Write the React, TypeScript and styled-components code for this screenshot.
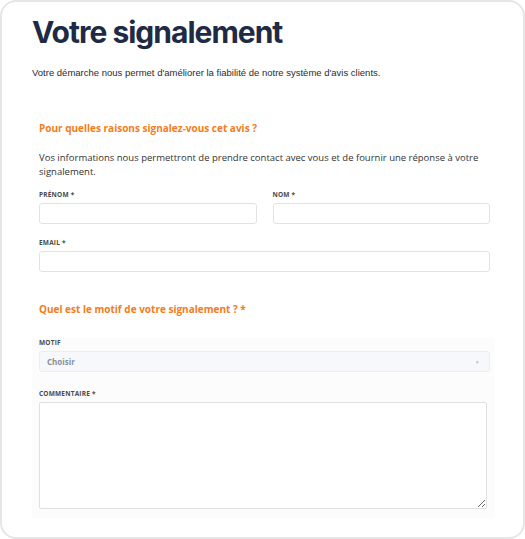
import styled, { createGlobalStyle } from "styled-components";

const GlobalStyle = createGlobalStyle`
body {
  margin: 0;
  background: #ffffff;
}
* {
  box-sizing: border-box;
}
`

const Card = styled.div`
width: 525px;
height: 539px;
border: 2px solid #e6e6e6;
border-radius: 16px;
background: #ffffff;
padding: 10px 28px 0 30px;
overflow: hidden;
`
const Title = styled.h1`
margin: 0;
font-family: Inter, "Liberation Sans", sans-serif;
font-weight: 700;
font-size: 30px;
line-height: 40px;
letter-spacing: -1px;
color: #1f2a44;
`
const Intro = styled.p`
margin: 14px 0 0;
font-family: "Liberation Sans", Arial, sans-serif;
font-size: 9.5px;
line-height: 14px;
color: #2b2b2b;
`
const Section = styled.section<{ $shade?: boolean }>`
margin-top: ${p => (p.$shade ? "0" : "40px")};
padding: 0 5px 9px 7px;
background: ${p => (p.$shade ? "#fcfcfd" : "transparent")};
font-family: "Open Sans", "Liberation Sans", sans-serif;
`
const Heading = styled.h2`
margin: 0;
font-size: 10px;
line-height: 16px;
font-weight: 700;
color: #f47c20;
`
const Info = styled.p`
margin: 15px 0 0;
font-size: 9.5px;
line-height: 13.5px;
color: #333333;
`
const Row = styled.div`
display: grid;
grid-template-columns: 1fr 1fr;
gap: 16px;
`
const Field = styled.div<{ $top?: number }>`
margin-top: ${p => p.$top ?? 14}px;
`
const Label = styled.label`
display: block;
font-size: 6.5px;
line-height: 9px;
font-weight: 700;
letter-spacing: 0.2px;
color: #4a4a4a;
text-transform: uppercase;
margin-bottom: 4px;
`
const Input = styled.input`
display: block;
width: 100%;
height: 21px;
border: 1px solid #e2e2e2;
border-radius: 3px;
background: #ffffff;
outline: none;
`
const SelectBox = styled.div`
display: flex;
align-items: center;
justify-content: space-between;
height: 21px;
padding: 0 10px 0 7px;
border: 1px solid #eceef2;
border-radius: 3px;
background: #f6f8fb;
font-size: 8px;
font-weight: 700;
color: #8a8f98;
`
const Caret = styled.span`
font-size: 5px;
color: #c0c4ca;
`
const TextArea = styled.textarea`
display: block;
width: 448px;
height: 107px;
border: 1px solid #e0e0e0;
border-radius: 2px;
resize: vertical;
outline: none;
`
const Spacer = styled.div`
height: 29px;
`

export default function App() {
  return (
    <>
      <GlobalStyle />
      <Card>
        <Title>Votre signalement</Title>
        <Intro>Votre démarche nous permet d'améliorer la fiabilité de notre système d'avis clients.</Intro>

        <Section>
          <Heading>Pour quelles raisons signalez-vous cet avis ?</Heading>
          <Info>Vos informations nous permettront de prendre contact avec vous et de fournir une réponse à votre signalement.</Info>
          <Row>
            <Field $top={12}>
              <Label>Prénom *</Label>
              <Input />
            </Field>
            <Field $top={12}>
              <Label>Nom *</Label>
              <Input />
            </Field>
          </Row>
          <Field>
            <Label>Email *</Label>
            <Input />
          </Field>
          <Spacer />
          <Heading>Quel est le motif de votre signalement ? *</Heading>
        </Section>

        <Section $shade>
          <Field $top={12}>
            <Label>Motif</Label>
            <SelectBox>
              Choisir
              <Caret>▾</Caret>
            </SelectBox>
          </Field>
          <Field $top={17}>
            <Label>Commentaire *</Label>
            <TextArea />
          </Field>
        </Section>
      </Card>
    </>
  )
}
